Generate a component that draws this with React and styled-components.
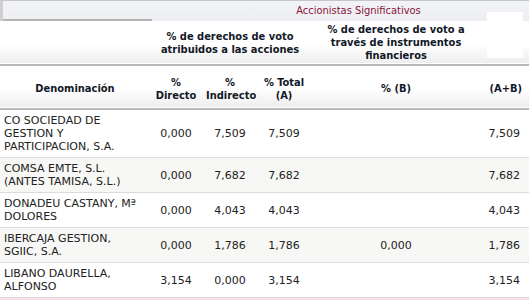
import React from 'react';
import styled, { createGlobalStyle } from 'styled-components';

const GlobalStyle = createGlobalStyle`
  html, body {
    margin: 0;
    padding: 0;
    background: #fff;
  }
  body {
    font-family: "DejaVu Sans", Verdana, sans-serif;
    font-size: 11px;
    color: #222;
  }
`;

const shareholders = [
  { name: 'CO SOCIEDAD DE GESTION Y PARTICIPACION, S.A.', direct: '0,000', indirect: '7,509', total: '7,509', b: '', ab: '7,509' },
  { name: 'COMSA EMTE, S.L. (ANTES TAMISA, S.L.)', direct: '0,000', indirect: '7,682', total: '7,682', b: '', ab: '7,682' },
  { name: 'DONADEU CASTANY, Mª DOLORES', direct: '0,000', indirect: '4,043', total: '4,043', b: '', ab: '4,043' },
  { name: 'IBERCAJA GESTION, SGIIC, S.A.', direct: '0,000', indirect: '1,786', total: '1,786', b: '0,000', ab: '1,786' },
  { name: 'LIBANO DAURELLA, ALFONSO', direct: '3,154', indirect: '0,000', total: '3,154', b: '', ab: '3,154' },
];

const Panel = styled.div`
  position: relative;
  width: 529px;
  overflow: hidden;
`;

const TitleBar = styled.div`
  display: flex;
  height: 20px;
  border-top: 1px solid #c6c6c6;
  border-left: 3px solid #cfcfcf;
  background: linear-gradient(#f3f4f7, #eceef2);
`;

const TitleTab = styled.div`
  width: 149px;
  border-bottom: 2px solid #b4b4b4;
  box-sizing: border-box;
`;

const Title = styled.div`
  flex: 1;
  padding-left: 36px;
  text-align: center;
  line-height: 20px;
  color: #8a1538;
  font-family: "DejaVu Sans Condensed", "DejaVu Sans", sans-serif;
  font-size: 11px;
`;

const WhitePatch = styled.div`
  position: absolute;
  top: 12px;
  left: 487px;
  width: 36px;
  height: 46px;
  background: #fff;
`;

const Table = styled.table`
  width: 529px;
  border-collapse: collapse;
  table-layout: fixed;
`;

const HeadRow = styled.tr`
  background: linear-gradient(#ffffff 0%, #ffffff 55%, #eeeeee 100%);
  border-bottom: 2px solid #b8b8b8;
`;

const Th = styled.th`
  height: 44px;
  padding: ${p => p.$pt || 0}px 4px 0 4px;
  box-sizing: border-box;
  font-family: "DejaVu Sans Condensed", "DejaVu Sans", sans-serif;
  font-weight: bold;
  font-size: 11px;
  line-height: 13px;
  color: #111827;
  text-align: ${p => p.$align || 'center'};
  vertical-align: middle;
  padding-right: ${p => (p.$align === 'right' ? 7 : 4)}px;
`;

const Row = styled.tr`
  background: ${p => (p.$alt ? '#f7f7f5' : '#fff')};
  border-bottom: 1px solid #dcdcdc;
`;

const Td = styled.td`
  padding: 4px 4px;
  line-height: 13px;
  color: #222;
  vertical-align: middle;
  text-align: ${p => p.$align || 'center'};
  padding-right: ${p => (p.$align === 'right' ? 9 : 4)}px;
`;

const FooterStrip = styled.div`
  height: 4px;
  background: #f5dfe5;
`;

export default function App() {
  return (
    <>
      <GlobalStyle />
      <Panel>
        <TitleBar>
          <TitleTab />
          <Title>Accionistas Significativos</Title>
        </TitleBar>
        <WhitePatch />
        <Table>
          <colgroup>
            <col style={{ width: 150 }} />
            <col style={{ width: 52 }} />
            <col style={{ width: 56 }} />
            <col style={{ width: 52 }} />
            <col style={{ width: 172 }} />
            <col style={{ width: 47 }} />
          </colgroup>
          <thead>
            <HeadRow>
              <Th />
              <Th colSpan={3}>
                % de derechos de voto
                <br />
                atribuidos a las acciones
              </Th>
              <Th>% de derechos de voto a través de instrumentos financieros</Th>
              <Th />
            </HeadRow>
            <HeadRow>
              <Th $pt={3}>Denominación</Th>
              <Th $pt={3}>
                %<br />Directo
              </Th>
              <Th $pt={3}>
                %<br />Indirecto
              </Th>
              <Th $pt={3}>
                % Total
                <br />
                (A)
              </Th>
              <Th $pt={3}>% (B)</Th>
              <Th $pt={3} $align="right">(A+B)</Th>
            </HeadRow>
          </thead>
          <tbody>
            {shareholders.map((s, i) => (
              <Row key={s.name} $alt={i % 2 === 1}>
                <Td $align="left">{s.name}</Td>
                <Td>{s.direct}</Td>
                <Td>{s.indirect}</Td>
                <Td>{s.total}</Td>
                <Td>{s.b}</Td>
                <Td $align="right">{s.ab}</Td>
              </Row>
            ))}
          </tbody>
        </Table>
        <FooterStrip />
      </Panel>
    </>
  );
}
